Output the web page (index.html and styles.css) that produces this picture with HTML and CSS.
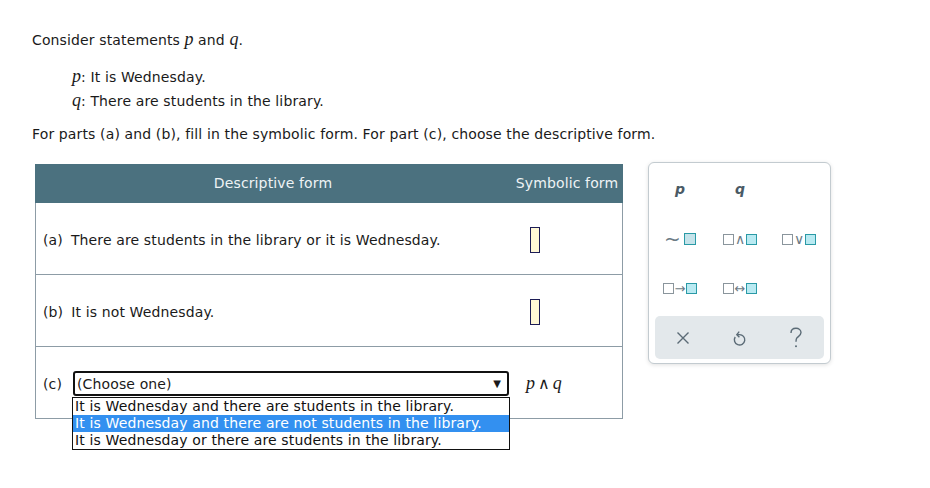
FILE: index.html
```html
<!DOCTYPE html>
<html>
<head>
<meta charset="utf-8">
<link rel="stylesheet" href="styles.css">
</head>
<body>
<div class="page">
  <p class="intro">Consider statements <i class="var">p</i> and <i class="var">q</i>.</p>
  <div class="defs">
    <div class="def"><i class="var">p</i>: It is Wednesday.</div>
    <div class="def"><i class="var">q</i>: There are students in the library.</div>
  </div>
  <p class="instr">For parts (a) and (b), fill in the symbolic form. For part (c), choose the descriptive form.</p>

  <div class="work">
    <div class="tbl">
      <div class="thead">
        <div class="c1">Descriptive form</div>
        <div class="c2">Symbolic form</div>
      </div>
      <div class="row">
        <div class="c1"><span class="lbl">(a)</span>There are students in the library or it is Wednesday.</div>
        <div class="c2"><span class="ans"></span></div>
      </div>
      <div class="row">
        <div class="c1"><span class="lbl">(b)</span>It is not Wednesday.</div>
        <div class="c2"><span class="ans"></span></div>
      </div>
      <div class="row">
        <div class="c1"><span class="lbl">(c)</span>
          <div class="selwrap">
            <div class="select"><span>(Choose one)</span><span class="arrow">▼</span></div>
            <div class="options">
              <div class="opt">It is Wednesday and there are students in the library.</div>
              <div class="opt hl">It is Wednesday and there are not students in the library.</div>
              <div class="opt">It is Wednesday or there are students in the library.</div>
            </div>
          </div>
        </div>
        <div class="c2 symcell"><span class="sym"><i>p</i><span class="and">∧</span><i>q</i></span></div>
      </div>
    </div>

    <div class="palette">
      <div class="keys">
        <div class="key"><i class="pv">p</i></div>
        <div class="key"><i class="pv">q</i></div>
        <div class="key"></div>
        <div class="key"><span class="op tilde">~</span><span class="bx on grey"></span></div>
        <div class="key"><span class="bx"></span><span class="op">∧</span><span class="bx on"></span></div>
        <div class="key"><span class="bx"></span><span class="op">∨</span><span class="bx on"></span></div>
        <div class="key"><span class="bx"></span><span class="op arr">→</span><span class="bx on"></span></div>
        <div class="key"><span class="bx"></span><span class="op arr">↔</span><span class="bx on"></span></div>
        <div class="key"></div>
      </div>
      <div class="bar">
        <div class="btn"><svg width="14" height="14" viewBox="0 0 14 14"><path d="M1.5 1.5 L12.5 12.5 M12.5 1.5 L1.5 12.5" stroke="#5b6b76" stroke-width="1.4" fill="none"/></svg></div>
        <div class="btn"><svg width="14" height="18" viewBox="0 0 14 18"><path d="M3.2 8 A5.2 5.2 0 1 0 7.4 5.6 L5.4 5.6" stroke="#5b6b76" stroke-width="1.4" fill="none"/><path d="M7.2 2.6 L4.8 5.6 L7.4 8.2" stroke="#5b6b76" stroke-width="1.4" fill="none"/></svg></div>
        <div class="btn"><svg width="14" height="22" viewBox="0 0 14 22"><path d="M2 6 C2 2.6 4.4 1.2 7 1.2 C9.8 1.2 12 3 12 5.6 C12 8.4 9.6 9.4 8 10.8 C7.2 11.6 7 12.6 7 14.8" stroke="#5b6b76" stroke-width="1.4" fill="none"/><circle cx="7" cy="19.2" r="1" fill="#5b6b76"/></svg></div>
      </div>
    </div>
  </div>
</div>
</body>
</html>
```
FILE: styles.css
```css
html, body {
  margin: 0;
  padding: 0;
  background: #ffffff;
}
.page {
  box-sizing: border-box;
  min-height: 488px;
  padding: 29px 0 0 32px;
  font-family: "DejaVu Sans", Verdana, sans-serif;
  font-size: 14px;
  letter-spacing: 0.13px;
  color: #1a1a1a;
}
.var {
  font-family: "Liberation Serif", "DejaVu Serif", serif;
  font-style: italic;
  font-size: 18px;
  letter-spacing: 0;
}
.intro {
  margin: 0;
  line-height: 20px;
  height: 20px;
}
.defs {
  margin: 15px 0 0 40px;
}
.def {
  line-height: 24px;
  height: 24px;
}
.instr {
  margin: 12px 0 0 0;
  line-height: 20px;
  height: 20px;
}
.work {
  display: flex;
  align-items: flex-start;
  margin-top: 19px;
}
.tbl {
  width: 588px;
  margin: 1px 0 0 3px;
}
.thead {
  display: flex;
  height: 39px;
  background: #4b717f;
  color: #eef3f5;
}
.thead .c1, .thead .c2 {
  display: flex;
  align-items: center;
  justify-content: center;
  padding-bottom: 1px;
}
.thead .c1 {
  width: 476px;
}
.thead .c2 {
  flex: 1;
}
.row {
  box-sizing: border-box;
  display: flex;
  align-items: center;
  height: 72px;
  padding-top: 2px;
  border: 1px solid #8d9ca6;
  border-top: none;
}
.row .c1 {
  box-sizing: border-box;
  width: 475px;
  padding-left: 7px;
  display: flex;
  align-items: center;
  white-space: nowrap;
}
.row .c2 {
  flex: 1;
  padding-left: 19px;
  display: flex;
  align-items: center;
}
.lbl {
  margin-right: 8px;
}
.ans {
  display: block;
  width: 8px;
  height: 24px;
  border: 1px solid #1c1c55;
  background: #fff8d6;
}
.selwrap {
  position: relative;
  margin-left: 3px;
}
.select {
  box-sizing: border-box;
  width: 436px;
  height: 25px;
  border: 2px solid #111;
  border-radius: 3px;
  display: flex;
  align-items: center;
  justify-content: space-between;
  padding: 0 6px 0 2px;
  background: #fff;
}
.arrow {
  font-size: 10px;
}
.options {
  position: absolute;
  left: -1px;
  top: 26px;
  box-sizing: border-box;
  width: 438px;
  border: 1px solid #111;
  background: #fff;
  z-index: 2;
}
.opt {
  height: 17px;
  line-height: 17px;
  padding-left: 2px;
  color: #111;
  white-space: nowrap;
}
.opt.hl {
  background: #3390f0;
  color: #ffffff;
}
.row .symcell {
  padding-left: 15px;
}
.sym {
  font-family: "Liberation Serif", "DejaVu Serif", serif;
  font-size: 18px;
  letter-spacing: 0;
}
.and {
  font-size: 16px;
  margin: 0 3px;
}
.palette {
  box-sizing: border-box;
  width: 183px;
  height: 202px;
  margin: -1px 0 0 25px;
  border: 1px solid #c3cbd0;
  border-radius: 6px;
  box-shadow: 0 1px 4px rgba(0, 0, 0, 0.12);
  background: #fff;
  padding: 0 6px 4px 6px;
  display: flex;
  flex-direction: column;
}
.keys {
  display: grid;
  grid-template-columns: 50px 70px 48px;
  grid-template-rows: 52px 48px 50px;
}
.key {
  display: flex;
  align-items: center;
  justify-content: center;
  gap: 1px;
  color: #6c7b85;
}
.pv {
  font-family: "DejaVu Sans", sans-serif;
  font-weight: bold;
  font-style: italic;
  font-size: 14px;
  color: #4a5a65;
}
.bx {
  box-sizing: border-box;
  width: 11px;
  height: 11px;
  border: 1.5px solid #8a959c;
  background: #fff;
}
.bx.on {
  border-color: #2a9aa6;
  background: #b9eaf2;
}
.bx.on.grey {
  width: 12px;
  height: 12px;
  background: #c5e3ea;
}
.op {
  font-size: 14px;
  line-height: 11px;
  color: #6c7b85;
  letter-spacing: 0;
}
.op.tilde {
  font-size: 20px;
  line-height: 12px;
  margin-right: 2px;
}
.op.arr {
  font-size: 13px;
}
.bar {
  margin-top: 3px;
  height: 43px;
  background: #e3e8eb;
  border-radius: 5px;
  display: grid;
  grid-template-columns: 1fr 1fr 1fr;
  align-items: center;
}
.btn {
  display: flex;
  justify-content: center;
  align-items: center;
}
.btn svg {
  display: block;
}
```
